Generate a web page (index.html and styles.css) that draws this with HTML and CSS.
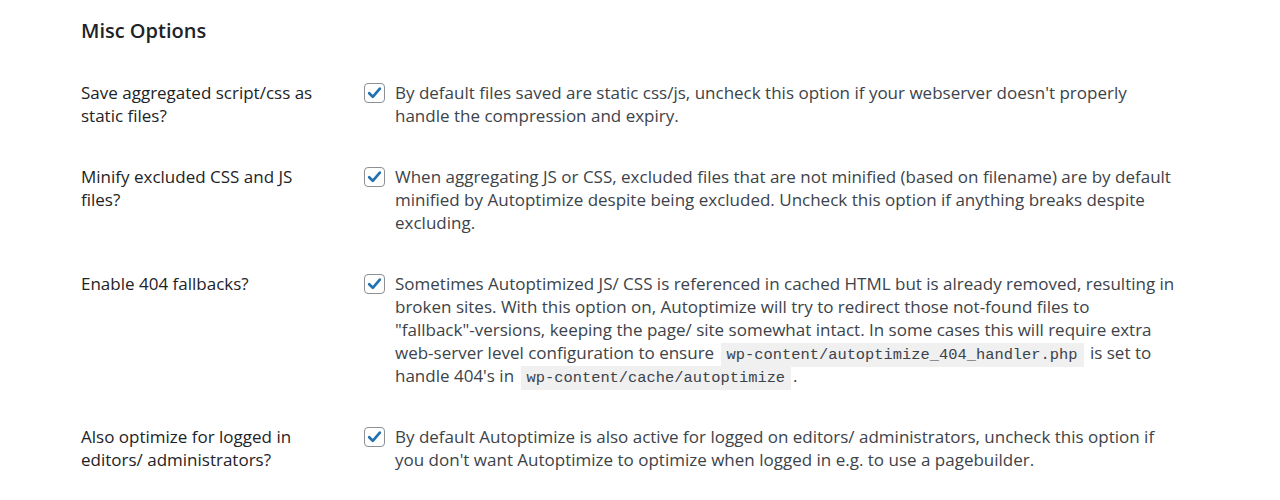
FILE: index.html
```html
<!DOCTYPE html>
<html>
<head>
<meta charset="utf-8">
<link rel="stylesheet" href="styles.css">
</head>
<body>
<div class="wrap">
  <h2 class="title">Misc Options</h2>
  <div class="form">
    <div class="row">
      <div class="label">Save aggregated script/css as static files?</div>
      <div class="field">
        <span class="cb"><svg viewBox="0 0 20 20" width="20" height="20"><path d="M4.4 10.2 L8.2 14 L15.6 5.4" fill="none" stroke="#2271b1" stroke-width="2.8" stroke-linecap="round" stroke-linejoin="round"/></svg></span>
        <p class="desc">By default files saved are static css/js, uncheck this option if your webserver doesn't properly handle the compression and expiry.</p>
      </div>
    </div>
    <div class="row">
      <div class="label">Minify excluded CSS and JS files?</div>
      <div class="field">
        <span class="cb"><svg viewBox="0 0 20 20" width="20" height="20"><path d="M4.4 10.2 L8.2 14 L15.6 5.4" fill="none" stroke="#2271b1" stroke-width="2.8" stroke-linecap="round" stroke-linejoin="round"/></svg></span>
        <p class="desc">When aggregating JS or CSS, excluded files that are not minified (based on filename) are by default minified by Autoptimize despite being excluded. Uncheck this option if anything breaks despite excluding.</p>
      </div>
    </div>
    <div class="row">
      <div class="label">Enable 404 fallbacks?</div>
      <div class="field">
        <span class="cb"><svg viewBox="0 0 20 20" width="20" height="20"><path d="M4.4 10.2 L8.2 14 L15.6 5.4" fill="none" stroke="#2271b1" stroke-width="2.8" stroke-linecap="round" stroke-linejoin="round"/></svg></span>
        <p class="desc">Sometimes Autoptimized JS/ CSS is referenced in cached HTML but is already removed, resulting in broken sites. With this option on, Autoptimize will try to redirect those not-found files to <span class="nw">"fallback"-versions,</span> keeping the page/ site somewhat intact. In some cases this will require extra <span class="nw">web-server</span> level configuration to ensure <code>wp-content/autoptimize_404_handler.php</code> is set to handle 404's in <code>wp-content/cache/autoptimize</code>.</p>
      </div>
    </div>
    <div class="row">
      <div class="label">Also optimize for logged in editors/ administrators?</div>
      <div class="field">
        <span class="cb"><svg viewBox="0 0 20 20" width="20" height="20"><path d="M4.4 10.2 L8.2 14 L15.6 5.4" fill="none" stroke="#2271b1" stroke-width="2.8" stroke-linecap="round" stroke-linejoin="round"/></svg></span>
        <p class="desc">By default Autoptimize is also active for logged on editors/ administrators, uncheck this option if you don't want Autoptimize to optimize when logged in e.g. to use a pagebuilder.</p>
      </div>
    </div>
  </div>
</div>
</body>
</html>
```

FILE: styles.css
```css
html, body {
  margin: 0;
  padding: 0;
  background: #ffffff;
}
body {
  font-family: "Open Sans", "Noto Sans", sans-serif;
  font-size: 17px;
  line-height: 23px;
  color: #3c434a;
}
.wrap {
  padding: 16px 0 0 81px;
  width: 1110px;
}
.title {
  margin: 0;
  font-size: 20px;
  line-height: 30px;
  font-weight: 600;
  color: #1d2327;
}
.form {
  margin-top: 35px;
}
.row {
  display: grid;
  grid-template-columns: 283px 1fr;
  padding-bottom: 38px;
}
.label {
  width: 250px;
  color: #1d2327;
}
.field {
  display: flex;
  gap: 10px;
  align-items: flex-start;
}
.cb {
  flex: none;
  width: 19px;
  height: 18px;
  margin-top: 2px;
  border: 1px solid #8c8f94;
  border-radius: 4px;
  display: flex;
  align-items: center;
  justify-content: center;
  background: #fff;
}
.cb svg {
  display: block;
}
.desc {
  margin: 0;
  width: 783px;
}
.nw {
  white-space: nowrap;
}
code {
  font-family: "Liberation Mono", monospace;
  font-size: 15.4px;
  line-height: 1;
  background: #f0f0f1;
  padding: 3px 6px;
  margin: 0 2px;
  color: #3c434a;
  white-space: nowrap;
}
```
